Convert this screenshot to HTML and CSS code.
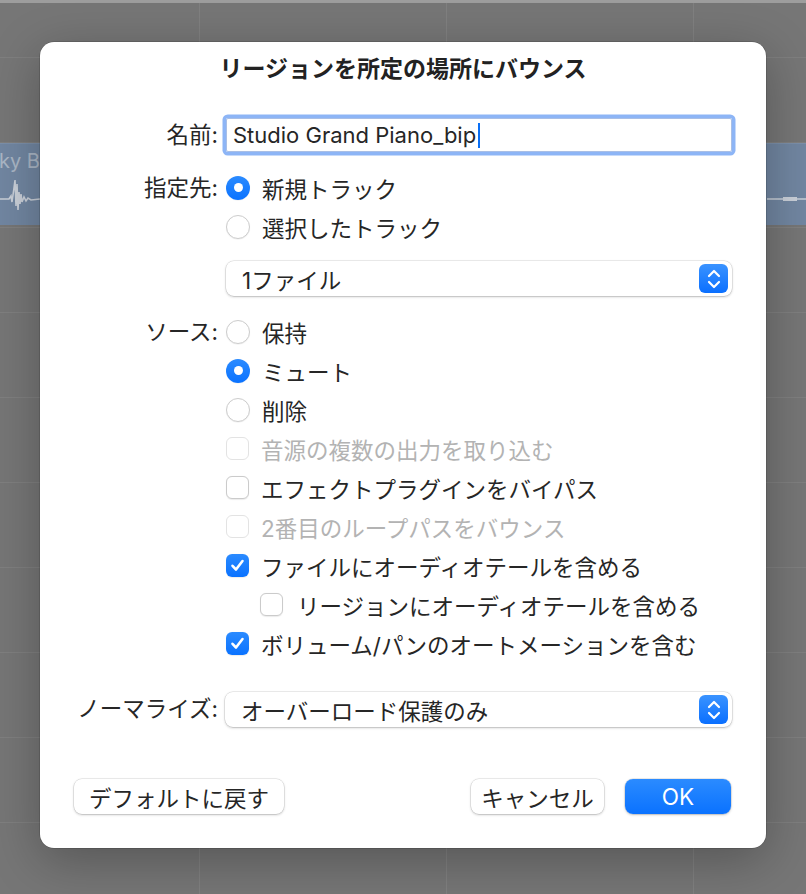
FILE: index.html
```html
<!DOCTYPE html>
<html lang="ja">

<head>
	<meta charset="utf-8">
	<title>リージョンを所定の場所にバウンス</title>
	<link rel="stylesheet" href="styles.css">
</head>

<body>
	<div id="arrange">
		<div class="ruler"></div>
		<div class="track first"></div>
		<div class="track"></div>
		<div class="track"></div>
		<div class="track"></div>
		<div class="track"></div>
		<div class="track"></div>
		<div class="track"></div>
		<div class="track"></div>
		<div class="track"></div>
		<div class="track"></div>
		<div class="track"></div>

		<!-- region behind the dialog -->
		<div class="region">
			<span class="region-name">ky Bounce</span>
			<svg class="wave" width="806" height="82" viewBox="0 0 806 82">
				<path d="M0 55 H9 L11 52 L12 58 L14 44 L15 36 L16 62 L17 40 L18 66 L19 48 L20 60 L21 50 L22 58 L24 53 L26 57 L28 54 L31 56 L40 55" fill="none" stroke="#c9cfd8" stroke-width="1.6" />
				<path d="M767 55 H783 M797 55 H806" fill="none" stroke="#c9cfd8" stroke-width="1.4" />
				<rect x="783" y="53" width="14" height="4" fill="#c9cfd8" />
			</svg>
		</div>
	</div>

	<div id="dialog">
		<h1 class="title">リージョンを所定の場所にバウンス</h1>

		<div class="form">
			<div class="row name-row">
				<div class="label">名前:</div>
				<div class="field"><span>Studio Grand Piano_bip</span><i class="caret"></i></div>
			</div>

			<div class="row dest-row">
				<div class="label">指定先:</div>
				<div class="options">
					<div class="opt"><span class="radio on"></span>新規トラック</div>
					<div class="opt"><span class="radio"></span>選択したトラック</div>
				</div>
			</div>

			<div class="row popup-row">
				<div class="label"></div>
				<div class="popup">
					<span>1ファイル</span>
					<span class="stepper">
						<svg width="28" height="28" viewBox="0 0 28 28">
							<path d="M9 11 L14 6 L19 11 M9 17 L14 22 L19 17" fill="none" stroke="#fff" stroke-width="2.2" stroke-linecap="round" stroke-linejoin="round" />
						</svg>
					</span>
				</div>
			</div>

			<div class="row source-row">
				<div class="label">ソース:</div>
				<div class="options">
					<div class="opt"><span class="radio"></span>保持</div>
					<div class="opt"><span class="radio on"></span>ミュート</div>
					<div class="opt"><span class="radio"></span>削除</div>
					<div class="opt disabled"><span class="check"></span>音源の複数の出力を取り込む</div>
					<div class="opt"><span class="check"></span>エフェクトプラグインをバイパス</div>
					<div class="opt disabled"><span class="check"></span>2番目のループパスをバウンス</div>
					<div class="opt"><span class="check on"><svg width="23" height="23" viewBox="0 0 23 23"><path d="M6.5 11.8 L10 15.5 L16.5 7" fill="none" stroke="#fff" stroke-width="2.6" stroke-linecap="round" stroke-linejoin="round" /></svg></span>ファイルにオーディオテールを含める</div>
					<div class="opt sub"><span class="check"></span>リージョンにオーディオテールを含める</div>
					<div class="opt"><span class="check on"><svg width="23" height="23" viewBox="0 0 23 23"><path d="M6.5 11.8 L10 15.5 L16.5 7" fill="none" stroke="#fff" stroke-width="2.6" stroke-linecap="round" stroke-linejoin="round" /></svg></span>ボリューム/パンのオートメーションを含む</div>
				</div>
			</div>

			<div class="row normalize-row">
				<div class="label">ノーマライズ:</div>
				<div class="popup">
					<span>オーバーロード保護のみ</span>
					<span class="stepper">
						<svg width="28" height="28" viewBox="0 0 28 28">
							<path d="M9 11 L14 6 L19 11 M9 17 L14 22 L19 17" fill="none" stroke="#fff" stroke-width="2.2" stroke-linecap="round" stroke-linejoin="round" />
						</svg>
					</span>
				</div>
			</div>
		</div>

		<div class="footer">
			<button class="btn reset">デフォルトに戻す</button>
			<div class="right">
				<button class="btn cancel">キャンセル</button>
				<button class="btn ok">OK</button>
			</div>
		</div>
	</div>
</body>

</html>
```

FILE: styles.css
```css
* {
	margin: 0;
	padding: 0;
	box-sizing: border-box;
}

body {
	width: 806px;
	height: 894px;
	overflow: hidden;
	position: relative;
	background: #767676;
	font-family: Inter, "Noto Sans CJK JP", sans-serif;
	font-size: 22.5px;
	color: #262626;
}

/* arrange window behind */
#arrange {
	width: 806px;
	height: 894px;
	position: relative;
	overflow: hidden;
	background-color: #767676;
	background-image: linear-gradient(90deg, transparent 246px, rgba(255, 255, 255, 0.07) 246px);
	background-size: 247px 100%;
	background-position: -47px 0;
}

#arrange .ruler {
	height: 3px;
	background: #9d9d9d;
}

#arrange .track {
	height: 85px;
	border-top: 1px solid rgba(255, 255, 255, 0.07);
}

#arrange .track.first {
	height: 54px;
	border-top: 0;
}

#arrange .region {
	position: absolute;
	left: 0;
	top: 143px;
	width: 806px;
	height: 82px;
	background: #7186a1;
	border-top: 1px solid #7b8fa9;
}

#arrange .region-name {
	position: absolute;
	left: -1px;
	top: 5px;
	font-size: 20px;
	color: #aab6c5;
	white-space: nowrap;
}

#arrange .wave {
	position: absolute;
	left: 0;
	top: 0;
}

/* dialog */
#dialog {
	position: absolute;
	left: 40px;
	top: 42px;
	width: 726px;
	height: 806px;
	background: #fff;
	border-radius: 14px;
	box-shadow: 0 0 0 0.5px rgba(0, 0, 0, 0.25), 0 12px 50px rgba(0, 0, 0, 0.28);
}

#dialog .title {
	padding-top: 10px;
	line-height: 34px;
	font-size: 23px;
	font-weight: 700;
	text-align: center;
	color: #222;
}

#dialog .form {
	padding-right: 34px;
}

#dialog .row {
	display: grid;
	grid-template-columns: 178px 1fr;
	column-gap: 8px;
}

#dialog .label {
	text-align: right;
	line-height: 39px;
	white-space: nowrap;
}

#dialog .name-row {
	margin-top: 32px;
}

#dialog .name-row .label {
	line-height: 33px;
}

#dialog .field {
	height: 34px;
	display: flex;
	align-items: center;
	padding-left: 6px;
	font-size: 22px;
	border: 1px solid #a9bfe6;
	border-radius: 2px;
	box-shadow: 0 0 0 3.5px #8db5f6;
	white-space: nowrap;
}

#dialog .caret {
	display: inline-block;
	width: 2px;
	height: 25px;
	margin-left: 2px;
	background: #0a6ff5;
}

#dialog .dest-row {
	margin-top: 16px;
}

#dialog .popup-row {
	margin-top: 15px;
}

#dialog .source-row {
	margin-top: 16px;
}

#dialog .normalize-row {
	margin-top: 29px;
}

#dialog .normalize-row .label {
	line-height: 34px;
}

#dialog .options {
	display: flex;
	flex-direction: column;
}

#dialog .opt {
	height: 39px;
	display: flex;
	align-items: center;
	gap: 12px;
	white-space: nowrap;
}

#dialog .opt.sub {
	padding-left: 34px;
	gap: 14px;
}

#dialog .opt.disabled {
	color: #b3b3b3;
}

/* radio buttons */
#dialog .radio {
	width: 24px;
	height: 24px;
	flex: none;
	border-radius: 50%;
	background: #fff;
	border: 1px solid #cdcdcd;
	box-shadow: 0 0.5px 1px rgba(0, 0, 0, 0.08);
	position: relative;
}

#dialog .radio.on {
	border: 0;
	background: linear-gradient(#2b8bff, #0a72ff);
}

#dialog .radio.on::after {
	content: "";
	position: absolute;
	left: 7.5px;
	top: 7.5px;
	width: 9px;
	height: 9px;
	border-radius: 50%;
	background: #fff;
}

/* checkboxes */
#dialog .check {
	width: 23px;
	height: 23px;
	flex: none;
	border-radius: 6px;
	background: #fff;
	border: 1px solid #cbcbcb;
	box-shadow: 0 0.5px 1px rgba(0, 0, 0, 0.08);
	display: flex;
}

#dialog .opt.disabled .check {
	border-color: #e3e3e3;
	box-shadow: none;
}

#dialog .check.on {
	border: 0;
	background: linear-gradient(#2b8bff, #0a72ff);
}

/* popup menus */
#dialog .popup {
	height: 35px;
	display: flex;
	align-items: center;
	justify-content: space-between;
	padding: 0 4px 0 16px;
	background: #fff;
	border-radius: 8px;
	box-shadow: 0 0 0 0.5px rgba(0, 0, 0, 0.14), 0 1px 2.5px rgba(0, 0, 0, 0.22);
	white-space: nowrap;
}

#dialog .normalize-row .popup {
	margin-left: -1px;
}

#dialog .stepper {
	width: 29px;
	height: 29px;
	border-radius: 6px;
	background: linear-gradient(#3a93ff, #0a6fff);
	display: flex;
	align-items: center;
	justify-content: center;
}

/* buttons */
#dialog .footer {
	margin-top: 52px;
	padding: 0 35px 0 34px;
	display: flex;
	justify-content: space-between;
}

#dialog .footer .right {
	display: flex;
	gap: 21px;
}

#dialog .btn {
	height: 35px;
	border: 0;
	border-radius: 8px;
	background: #fff;
	font-family: Inter, "Noto Sans CJK JP", sans-serif;
	font-size: 22.5px;
	color: #262626;
	box-shadow: 0 0 0 0.5px rgba(0, 0, 0, 0.14), 0 1px 2.5px rgba(0, 0, 0, 0.22);
}

#dialog .btn.reset {
	width: 210px;
}

#dialog .btn.cancel {
	width: 133px;
}

#dialog .btn.ok {
	width: 106px;
	color: #fff;
	background: linear-gradient(#2b8bff, #0a72ff);
}
```
